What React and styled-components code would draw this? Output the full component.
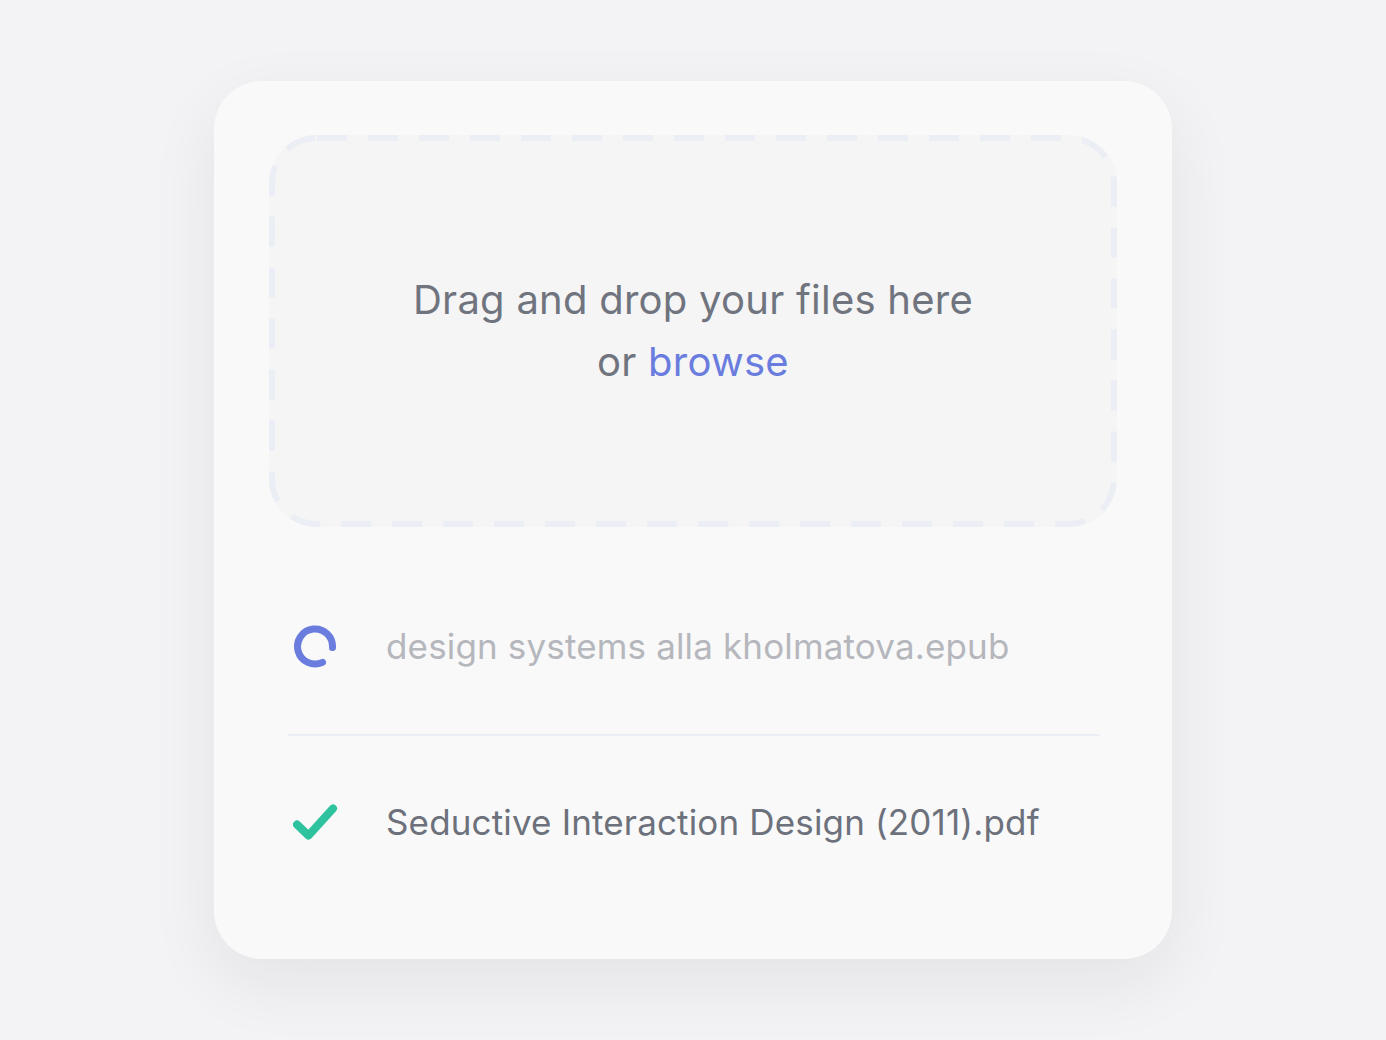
import React from "react";
import styled, { createGlobalStyle } from "styled-components";

const Global = createGlobalStyle`
  html, body { margin: 0; padding: 0; background: #f3f3f5; }
  body { font-family: Inter, "Noto Sans", sans-serif; -webkit-font-smoothing: antialiased; }
`;

const Page = styled.div`
  min-height: 1040px;
  display: flex;
  justify-content: center;
  align-items: flex-start;
  padding-top: 81px;
  box-sizing: border-box;
`;

const Card = styled.div`
  width: 958px;
  box-sizing: border-box;
  background: #f9f9f9;
  border-radius: 48px;
  padding: 54px 55px 51px;
  box-shadow: 0 24px 70px rgba(30, 35, 60, 0.07);
  display: flex;
  flex-direction: column;
`;

const DropZone = styled.div`
  position: relative;
  flex-shrink: 0;
  height: 392px;
  border-radius: 48px;
  background: #f5f5f5;
  display: flex;
  align-items: center;
  justify-content: center;
  text-align: center;
`;

const DashFrame = styled.svg`
  position: absolute;
  inset: 0;
  width: 100%;
  height: 100%;
  pointer-events: none;
`;

const DropText = styled.p`
  margin: 0;
  font-size: 40px;
  line-height: 62px;
  letter-spacing: 0.25px;
  color: #6f747e;
`;

const Browse = styled.span`
  color: #6a7ddf;
`;

const List = styled.div`
  margin-top: 31px;
  padding: 0 17px 0 19px;
  display: flex;
  flex-direction: column;
`;

const Row = styled.div`
  height: ${(p) => (p.$last ? 172 : 176)}px;
  flex-shrink: 0;
  display: flex;
  align-items: center;
  gap: 48px;
  padding-left: 5px;
  & + & {
    border-top: 2px solid #eceef5;
  }
`;

const IconBox = styled.div`
  width: 45px;
  height: 45px;
  display: flex;
  align-items: center;
  justify-content: center;
  flex-shrink: 0;
`;

const FileName = styled.span`
  font-size: 35px;
  letter-spacing: 0.15px;
  color: ${(p) => (p.$pending ? "#b5b7bd" : "#6c717c")};
`;

const Spinner = () => (
  <svg width="45" height="45" viewBox="0 0 45 45">
    <path
      d="M 39.5 23.5 A 17.5 17.5 0 1 0 29.5 38.3"
      fill="none"
      stroke="#6a7ddf"
      strokeWidth="7"
      strokeLinecap="round"
    />
  </svg>
);

const Check = () => (
  <svg width="45" height="45" viewBox="0 0 45 45">
    <path
      d="M 4 24.5 L 15.5 35.5 L 40 8.5"
      fill="none"
      stroke="#2ec29f"
      strokeWidth="8"
      strokeLinecap="round"
      strokeLinejoin="round"
    />
  </svg>
);

export default function App() {
  return (
    <>
      <Global />
      <Page>
        <Card>
          <DropZone>
            <DashFrame>
              <rect
                x="3"
                y="3"
                width="842"
                height="386"
                rx="45"
                ry="45"
                fill="none"
                stroke="#eceef5"
                strokeWidth="6"
                strokeDasharray="30 21"
              />
            </DashFrame>
            <DropText>
              Drag and drop your files here
              <br />
              or <Browse>browse</Browse>
            </DropText>
          </DropZone>
          <List>
            <Row>
              <IconBox>
                <Spinner />
              </IconBox>
              <FileName $pending>design systems alla kholmatova.epub</FileName>
            </Row>
            <Row $last>
              <IconBox>
                <Check />
              </IconBox>
              <FileName>Seductive Interaction Design (2011).pdf</FileName>
            </Row>
          </List>
        </Card>
      </Page>
    </>
  );
}
